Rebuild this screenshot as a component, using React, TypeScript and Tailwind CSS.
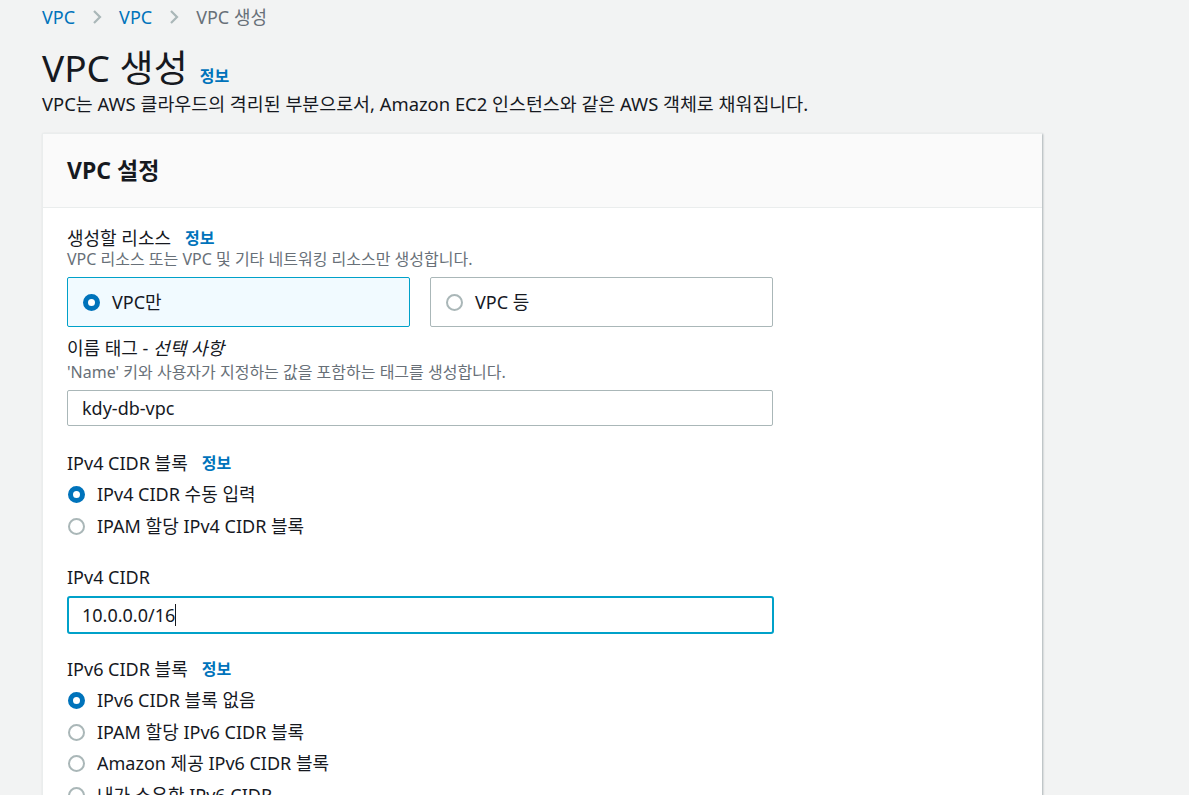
import React from "react";

const font = { fontFamily: '"Noto Sans", "Noto Sans CJK KR", sans-serif' };

function Chevron() {
  return (
    <svg width="12" height="18" viewBox="0 0 12 18" className="mx-[16px]">
      <path d="M3 3 L9 9 L3 15" fill="none" stroke="#aab7b8" strokeWidth="2.2" />
    </svg>
  );
}

function Radio({ checked }: { checked: boolean }) {
  return checked ? (
    <span className="inline-block w-[17px] h-[17px] rounded-full border-[5px] border-[#0073bb] bg-white shrink-0" />
  ) : (
    <span className="inline-block w-[17px] h-[17px] rounded-full border-2 border-[#aab7b8] bg-white shrink-0" />
  );
}

function Info() {
  return <span className="ml-[14px] text-[16px] font-bold text-[#0073bb]">정보</span>;
}

function RadioRow({ checked, label, h }: { checked: boolean; label: string; h: string }) {
  return (
    <div className={`flex items-center ${h}`}>
      <span className="ml-[1px] flex">
        <Radio checked={checked} />
      </span>
      <span className="ml-[12px] text-[18px] text-[#16191f]">{label}</span>
    </div>
  );
}

export default function App() {
  return (
    <div style={font} className="min-h-screen bg-[#f2f3f3] pl-[42px] pt-[5px] overflow-hidden h-[795px]">
      <div className="flex items-center h-[24px] text-[18px]">
        <span className="text-[#0073bb]">VPC</span>
        <Chevron />
        <span className="text-[#0073bb]">VPC</span>
        <Chevron />
        <span className="text-[#687078]">VPC 생성</span>
      </div>
      <div className="flex items-baseline mt-[19px] h-[40px]">
        <span className="text-[37px] leading-[40px] text-[#16191f]">VPC 생성</span>
        <span className="ml-[12px] text-[16px] font-bold text-[#0073bb]">정보</span>
      </div>
      <div className="text-[18.4px] leading-[24px] h-[24px] text-[#16191f] mt-[4px]">
        VPC는 AWS 클라우드의 격리된 부분으로서, Amazon EC2 인스턴스와 같은 AWS 객체로 채워집니다.
      </div>
      <div className="mt-[17px] w-[1000px] bg-white border-l border-t border-[#eaeded] shadow-[1px_1px_2px_rgba(0,28,36,0.3)] h-[700px]">
        <div className="h-[74px] bg-[#fafafa] border-b border-[#eaeded] flex items-center pl-[24px]">
          <span className="text-[23px] font-bold text-[#16191f]">VPC 설정</span>
        </div>
        <div className="pl-[24px] pt-[19px] text-[#16191f]">
          <div className="flex items-center h-[22px] text-[18px]">
            생성할 리소스
            <Info />
          </div>
          <div className="h-[20px] flex items-center text-[16px] text-[#687078]">
            VPC 리소스 또는 VPC 및 기타 네트워킹 리소스만 생성합니다.
          </div>
          <div className="mt-[8px] flex gap-[20px]">
            <div className="w-[343px] h-[50px] border border-[#00a1c9] bg-[#f1faff] rounded-[2px] flex items-center pl-[15px]">
              <Radio checked />
              <span className="ml-[12px] text-[18px]">VPC만</span>
            </div>
            <div className="w-[343px] h-[50px] border border-[#aab7b8] bg-white rounded-[2px] flex items-center pl-[15px]">
              <Radio checked={false} />
              <span className="ml-[12px] text-[18px]">VPC 등</span>
            </div>
          </div>
          <div className="mt-[10px] h-[22px] flex items-center text-[18px]">
            이름 태그 -&nbsp;<i>선택 사항</i>
          </div>
          <div className="mt-[3px] h-[20px] flex items-center text-[16px] text-[#687078]">
            'Name' 키와 사용자가 지정하는 값을 포함하는 태그를 생성합니다.
          </div>
          <div className="mt-[8px] w-[706px] h-[36px] border border-[#aab7b8] rounded-[2px] flex items-center pl-[14px] text-[18px]">
            kdy-db-vpc
          </div>
          <div className="mt-[26px] h-[22px] flex items-center text-[18px]">
            IPv4 CIDR 블록
            <Info />
          </div>
          <div className="mt-[4px]">
            <RadioRow checked label="IPv4 CIDR 수동 입력" h="h-[32px]" />
            <RadioRow checked={false} label="IPAM 할당 IPv4 CIDR 블록" h="h-[32px]" />
          </div>
          <div className="mt-[24px] h-[22px] flex items-center text-[18px]">IPv4 CIDR</div>
          <div className="mt-[8px] w-[707px] h-[38px] border-2 border-[#00a1c9] rounded-[3px] flex items-center pl-[13px] text-[18px]">
            10.0.0.0/16
            <span className="inline-block w-px h-[22px] bg-[#16191f]" />
          </div>
          <div className="mt-[24px] h-[22px] flex items-center text-[18px]">
            IPv6 CIDR 블록
            <Info />
          </div>
          <div className="mt-[5px]">
            <RadioRow checked label="IPv6 CIDR 블록 없음" h="h-[31.5px]" />
            <RadioRow checked={false} label="IPAM 할당 IPv6 CIDR 블록" h="h-[31.5px]" />
            <RadioRow checked={false} label="Amazon 제공 IPv6 CIDR 블록" h="h-[31.5px]" />
            <RadioRow checked={false} label="내가 소유한 IPv6 CIDR" h="h-[31.5px]" />
          </div>
        </div>
      </div>
    </div>
  );
}
